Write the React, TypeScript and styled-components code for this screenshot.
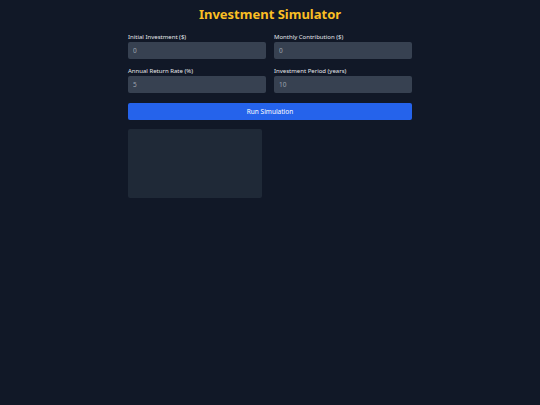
import React from "react";
import styled, { createGlobalStyle } from "styled-components";

const Global = createGlobalStyle`
  html, body { margin: 0; padding: 0; background: #111827; }
  body { font-family: "Noto Sans", "Open Sans", sans-serif; color: #e5e7eb; }
  * { box-sizing: border-box; }
`;

const Page = styled.div`
  width: 284px;
  margin: 0 auto;
  padding-top: 6px;
`;

const Title = styled.h1`
  margin: 0 0 11px;
  text-align: center;
  font-size: 13px;
  line-height: 16px;
  font-weight: 700;
  color: #fbbf24;
`;

const Form = styled.div`
  display: grid;
  grid-template-columns: 1fr 1fr;
  column-gap: 8px;
  row-gap: 8px;
`;

const Field = styled.label`
  display: flex;
  flex-direction: column;
  gap: 1px;
`;

const Label = styled.span`
  font-size: 6px;
  line-height: 8px;
  color: #e5e7eb;
`;

const Input = styled.input`
  height: 17px;
  width: 100%;
  border: none;
  border-radius: 2px;
  background: #374151;
  color: #e5e7eb;
  padding: 0 5px;
  font-family: inherit;
  font-size: 6.5px;
  outline: none;
  &::placeholder { color: #9ca3af; }
`;

const Button = styled.button`
  margin-top: 10px;
  width: 100%;
  height: 17px;
  border: none;
  border-radius: 2px;
  background: #2563eb;
  color: #ffffff;
  font-family: inherit;
  font-size: 6.5px;
  cursor: pointer;
`;

const Results = styled.div`
  margin-top: 9px;
  display: grid;
  grid-template-columns: 1fr 1fr;
  gap: 16px;
`;

const Card = styled.div`
  height: 69px;
  background: #1f2937;
  border-radius: 2px;
`;

const fields = [
  { label: "Initial Investment ($)", placeholder: "0" },
  { label: "Monthly Contribution ($)", placeholder: "0" },
  { label: "Annual Return Rate (%)", placeholder: "5" },
  { label: "Investment Period (years)", placeholder: "10" },
];

export default function App() {
  return (
    <>
      <Global />
      <Page>
        <Title>Investment Simulator</Title>
        <Form>
          {fields.map((f) => (
            <Field key={f.label}>
              <Label>{f.label}</Label>
              <Input type="number" placeholder={f.placeholder} />
            </Field>
          ))}
        </Form>
        <Button>Run Simulation</Button>
        <Results>
          <Card />
        </Results>
      </Page>
    </>
  );
}
